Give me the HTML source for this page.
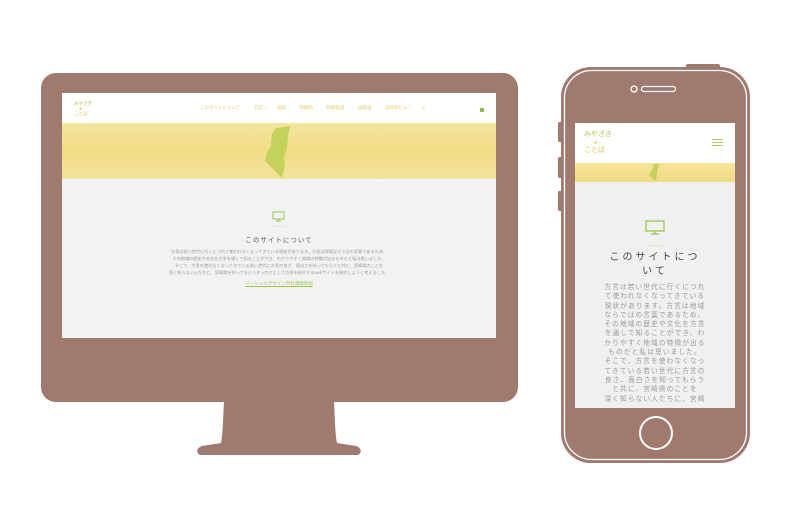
<!DOCTYPE html>
<html><head><meta charset="utf-8"><style>
*{margin:0;padding:0;box-sizing:border-box}
body{width:792px;height:528px;background:#fff;position:relative;overflow:hidden;font-family:"Liberation Sans","Noto Sans CJK JP",sans-serif}
.a{position:absolute}
.jp{font-family:"Liberation Sans","Noto Sans CJK JP",sans-serif}
</style></head><body>
<div class="a" style="left:41px;top:73px;width:477px;height:329px;border-radius:15px;background:#a07a6e"></div>
<svg class="a" style="left:0;top:0" width="792" height="528">
<path d="M224 401 L334 401 C335 420 335 432 337 443 L356 446 C362 448 362 453 358 455 L200 455 C196 453 196 448 202 446 L221 443 C223 432 223 420 224 401 Z" fill="#a07a6e"/>
<rect x="686" y="64" width="34" height="6" rx="2" fill="#a07a6e"/>
<rect x="558" y="122" width="5" height="20" rx="1.5" fill="#a07a6e"/>
<rect x="558" y="157" width="5" height="21" rx="1.5" fill="#a07a6e"/>
<rect x="558" y="191" width="5" height="20" rx="1.5" fill="#a07a6e"/>
<rect x="561" y="67" width="189" height="396" rx="30" fill="#a07a6e"/>
<rect x="564.5" y="70.5" width="182" height="389" rx="27" fill="none" stroke="#fff" stroke-width="1.3"/>
<circle cx="634" cy="89" r="3" fill="none" stroke="#fff" stroke-width="1.3"/>
<rect x="641.5" y="86.5" width="34" height="5" rx="2.5" fill="none" stroke="#fff" stroke-width="1.3"/>
<circle cx="656" cy="433" r="16" fill="none" stroke="#fff" stroke-width="2"/>
</svg>
<div class="a" style="left:62px;top:93px;width:434px;height:245px;background:#f2f2f2;overflow:hidden">
  <div class="a" style="left:0;top:0;width:434px;height:30px;background:#fff"></div>
  <div class="a jp" style="left:12px;top:8px;font-size:4.5px;line-height:5px;color:#a8c850">みやざき<br><span style="color:#e8c020;margin-left:5px">●</span><br><span style="color:#e0c040">ことば</span></div>
  <div class="a jp" style="left:138px;top:12px;font-size:4.5px;color:#e3cc70;white-space:nowrap">このサイトについて　　　方言 ⌄　　語談　　　和歌詞　　　和歌歌語　　　送歌語　　　宮崎県とは？　　ｑ</div>
  <div class="a" style="left:418px;top:15px;width:4px;height:4px;background:#8cc040"></div>
  <div class="a" style="left:0;top:30px;width:434px;height:56px;background:linear-gradient(180deg,#f4e6a0,#f0dc84 50%,#f3e49c)"></div>
  <svg class="a" style="left:200px;top:33px" width="36" height="52"><path d="M14 2 L28 0 L26 10 L25 22 L22 30 L23 40 L20 52 L14 46 L8 40 L3 35 L5 27 L9 20 L10 8 Z" fill="#c4d25a"/></svg>
  <svg class="a" style="left:210px;top:118px" width="13" height="11"><rect x="1" y="1" width="11" height="7" fill="none" stroke="#9cc84c" stroke-width="1"/><path d="M4 10 H9 M6.5 8 V10" stroke="#9cc84c"/></svg>
  <div class="a" style="left:210px;top:133px;width:13px;height:1px;background:#e4e4e4"></div>
  <div class="a jp" style="left:0;top:141px;width:434px;text-align:center;font-size:6.5px;color:#555;letter-spacing:1px">このサイトについて</div>
  <div class="a jp" style="left:80px;top:155px;width:274px;text-align:center;font-size:4.2px;line-height:7px;color:#999">方言は若い世代に行くにつれて使われなくなってきている現状があります。方言は地域ならではの言葉であるため、<br>その地域の歴史や文化を方言を通して知ることができ、わかりやすく地域の特徴が出るものだと私は思いました。<br>そこで、方言を使わなくなってきている若い世代に方言の良さ、面白さを知ってもらうと共に、宮崎県のことを<br>深く知らない人たちに、宮崎県を知ってもらうきっかけとして方言を紹介するwebサイトを制作しようと考えました。</div>
  <div class="a jp" style="left:0;top:188px;width:434px;text-align:center;font-size:4.5px;color:#9cc84c;text-decoration:underline">ソーシャルデザイン学科課題参加</div>
</div>
<div class="a" style="left:575px;top:123px;width:160px;height:285px;background:#f0f0f0;overflow:hidden">
  <div class="a" style="left:0;top:0;width:160px;height:40px;background:#fff"></div>
  <div class="a jp" style="left:9px;top:8px;font-size:7px;line-height:8px;color:#a8c850">みやざき<br><span style="color:#e8c020;font-size:5px;margin-left:10px">●</span><br><span style="color:#e0c040">ことば</span></div>
  <div class="a" style="left:137px;top:16px;width:11px;height:1px;background:#a8d060;box-shadow:0 3px 0 #a8d060,0 6px 0 #a8d060"></div>
  <div class="a" style="left:0;top:40px;width:160px;height:19px;background:linear-gradient(180deg,#f4e49a,#f0dc84)"></div>
  <svg class="a" style="left:74px;top:41px" width="12" height="17"><path d="M5 0 L10 0 L9 5 L8 10 L7 17 L3 14 L0 11 L3 6 Z" fill="#c4d25a"/></svg>
  <svg class="a" style="left:70px;top:97px" width="20" height="15"><rect x="1" y="1" width="18" height="10" fill="none" stroke="#9cc84c" stroke-width="1.3"/><path d="M6 14 H14 M10 11 V14" stroke="#9cc84c" stroke-width="1.3"/></svg>
  <div class="a" style="left:73px;top:122px;width:14px;height:1px;background:#dde8c8"></div>
  <div class="a jp" style="left:30px;top:128px;width:100px;text-align:center;font-size:10px;line-height:14px;color:#444;letter-spacing:3px">このサイトについて</div>
  <div class="a jp" style="left:0;top:160px;width:160px;text-align:center;font-size:6.7px;line-height:9.3px;color:#999;letter-spacing:1.1px;white-space:nowrap">方言は若い世代に行くにつれ<br>て使われなくなってきている<br>現状があります。方言は地域<br>ならではの言葉であるため、<br>その地域の歴史や文化を方言<br>を通して知ることができ、わ<br>かりやすく地域の特徴が出る<br>ものだと私は思いました。<br>そこで、方言を使わなくなっ<br>てきている若い世代に方言の<br>良さ、面白さを知ってもらう<br>と共に、宮崎県のことを<br>深く知らない人たちに、宮崎</div>
</div>
</body></html>
